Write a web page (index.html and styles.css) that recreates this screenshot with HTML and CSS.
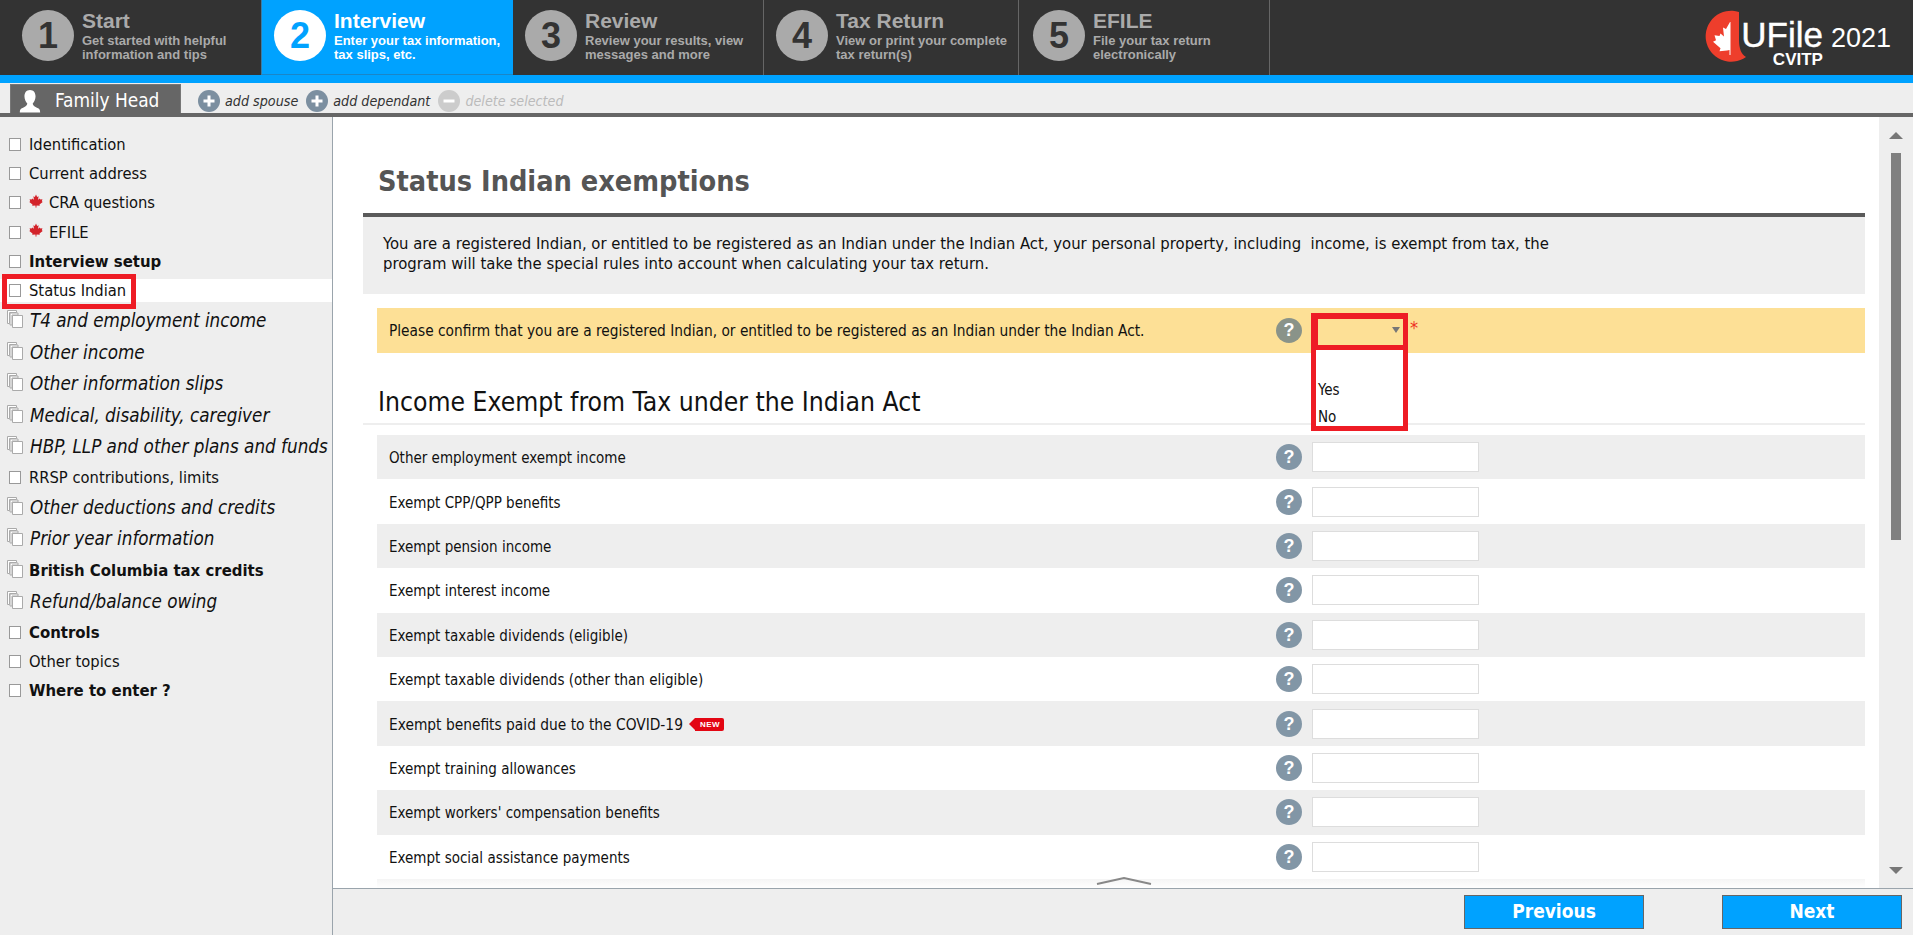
FILE: index.html
```html
<!DOCTYPE html>
<html lang="en">
<head>
<meta charset="utf-8">
<title>UFile CVITP 2021</title>
<link rel="stylesheet" href="styles.css">
</head>
<body>
<svg class="defs" width="0" height="0" aria-hidden="true">
  <symbol id="leaf" viewBox="0 0 24 24"><path d="M12 1 14 5l2.500-1-1 6 3-2.500 1 2 3.500-.5-1 3.500 1.500 1L18 18l.5 2-5.500-.5-.5 4h-1l-.5-4-5.500.5.5-2-5.500-4.500 1.500-1-1-3.500 3.500.5 1-2 3 2.500-1-6 2.500 1z"/></symbol>
  <symbol id="copies" viewBox="0 0 16 18"><path d="M.5.500h9v2h-7v11h-2zM3 3h8v2H5v10H3z" fill="#fff" stroke="#aaa"/><path d="M5.500 5.500h10v12h-10z" fill="#fff" stroke="#aaa"/></symbol>
  <symbol id="plus" viewBox="0 0 22 22"><circle cx="11" cy="11" r="11"/><path d="M5.500 11h11M11 5.500v11" stroke="#fff" stroke-width="3"/></symbol>
</svg>

<header class="topbar">
  <nav class="steps">
    <a class="step step-first"><span class="num">1</span><span class="step-text"><b>Start</b><small>Get started with helpful<br>information and tips</small></span></a>
    <a class="step step-active"><span class="num">2</span><span class="step-text"><b>Interview</b><small>Enter your tax information,<br>tax slips, etc.</small></span></a>
    <a class="step step-3"><span class="num">3</span><span class="step-text"><b>Review</b><small>Review your results, view<br>messages and more</small></span></a>
    <a class="step step-4"><span class="num">4</span><span class="step-text"><b>Tax Return</b><small>View or print your complete<br>tax return(s)</small></span></a>
    <a class="step step-5"><span class="num">5</span><span class="step-text"><b>EFILE</b><small>File your tax return<br>electronically</small></span></a>
  </nav>
  <div class="logo">
    <svg class="logo-mark" viewBox="0 0 44 52" width="44" height="52"><path d="M34 2A25.500 25.500 0 1 0 41 47C36 44 34 38 34 30z" fill="#ee3e2c"/><path d="M25 12l-4 7-3-1.500 1 9-3.500-3-1 2.500-5-.8 1.500 5-3 1.500 7.500 6.500-1 3 7.500-.8 2.500-.4v5h1V12z" fill="#fff"/></svg>
    <div class="logo-text"><span class="logo-ufile">UFile</span><span class="logo-cvitp">CVITP</span></div>
    <span class="logo-year">2021</span>
  </div>
</header>
<div class="bluebar"></div>

<div class="toolbar">
  <div class="person-tab">
    <svg class="person" viewBox="0 0 26 26" width="24" height="24"><path d="M13 1c4 0 6 3 6 7 0 3-1.500 6-3 7.500 0 2 1 3 4 4.500 3 1.200 4 2 4 5.500H2c0-3.500 1-4.300 4-5.500 3-1.500 4-2.500 4-4.500C8.500 14 7 11 7 8c0-4 2-7 6-7z" fill="#fff"/></svg>
    <span>Family Head</span>
  </div>
  <a class="tool"><svg class="tool-icon"><use href="#plus"/></svg>add spouse</a>
  <a class="tool"><svg class="tool-icon"><use href="#plus"/></svg>add dependant</a>
  <a class="tool tool-off"><svg class="tool-icon" viewBox="0 0 22 22"><circle cx="11" cy="11" r="11"/><path d="M5.500 11h11" stroke="#fff" stroke-width="3"/></svg>delete selected</a>
</div>

<div class="workspace">
  <aside class="sidebar">
    <ul class="nav">
      <li class="nav-item"><i class="box"></i>Identification</li>
      <li class="nav-item"><i class="box"></i>Current address</li>
      <li class="nav-item"><i class="box"></i><svg class="mini-leaf"><use href="#leaf"/></svg>CRA questions</li>
      <li class="nav-item"><i class="box"></i><svg class="mini-leaf"><use href="#leaf"/></svg>EFILE</li>
      <li class="nav-item nav-bold"><i class="box"></i>Interview setup</li>
      <li class="nav-item nav-current"><i class="box"></i>Status Indian</li>
      <li class="nav-item nav-group"><svg class="copies"><use href="#copies"/></svg>T4 and employment income</li>
      <li class="nav-item nav-group"><svg class="copies"><use href="#copies"/></svg>Other income</li>
      <li class="nav-item nav-group"><svg class="copies"><use href="#copies"/></svg>Other information slips</li>
      <li class="nav-item nav-group"><svg class="copies"><use href="#copies"/></svg>Medical, disability, caregiver</li>
      <li class="nav-item nav-group"><svg class="copies"><use href="#copies"/></svg>HBP, LLP and other plans and funds</li>
      <li class="nav-item"><i class="box"></i>RRSP contributions, limits</li>
      <li class="nav-item nav-group"><svg class="copies"><use href="#copies"/></svg>Other deductions and credits</li>
      <li class="nav-item nav-group"><svg class="copies"><use href="#copies"/></svg>Prior year information</li>
      <li class="nav-item nav-group nav-group-bold"><svg class="copies"><use href="#copies"/></svg>British Columbia tax credits</li>
      <li class="nav-item nav-group"><svg class="copies"><use href="#copies"/></svg>Refund/balance owing</li>
      <li class="nav-item nav-bold"><i class="box"></i>Controls</li>
      <li class="nav-item"><i class="box"></i>Other topics</li>
      <li class="nav-item nav-bold"><i class="box"></i>Where to enter ?</li>
    </ul>
    <span class="annot annot-nav"></span>
  </aside>

  <div class="main">
    <div class="center">
      <svg class="side-chevron" viewBox="0 0 9 56" width="9" height="56"><path d="M1 1l7 27-7 27" fill="none" stroke="#999" stroke-width="1.500"/></svg>
      <div class="scroller">
        <div class="content">
          <h1 class="page-title">Status Indian exemptions</h1>
          <p class="intro">You are a registered Indian, or entitled to be registered as an Indian under the Indian Act, your personal property, including&nbsp; income, is exempt from tax, the program will take the special rules into account when calculating your tax return.</p>
          <div class="confirm">
            <span class="row-label">Please confirm that you are a registered Indian, or entitled to be registered as an Indian under the Indian Act.</span>
            <span class="help help-warm">?</span>
            <span class="select"><i class="caret"></i></span>
            <span class="req">*</span>
          </div>
          <h2 class="section">Income Exempt from Tax under the Indian Act</h2>
          <div class="rows">
            <div class="row"><span class="row-label">Other employment exempt income</span><span class="help">?</span><span class="field"></span></div>
            <div class="row"><span class="row-label">Exempt CPP/QPP benefits</span><span class="help">?</span><span class="field"></span></div>
            <div class="row"><span class="row-label">Exempt pension income</span><span class="help">?</span><span class="field"></span></div>
            <div class="row"><span class="row-label">Exempt interest income</span><span class="help">?</span><span class="field"></span></div>
            <div class="row"><span class="row-label">Exempt taxable dividends (eligible)</span><span class="help">?</span><span class="field"></span></div>
            <div class="row"><span class="row-label">Exempt taxable dividends (other than eligible)</span><span class="help">?</span><span class="field"></span></div>
            <div class="row"><span class="row-label row-label-wide">Exempt benefits paid due to the COVID-19<span class="new">NEW</span></span><span class="help">?</span><span class="field"></span></div>
            <div class="row"><span class="row-label">Exempt training allowances</span><span class="help">?</span><span class="field"></span></div>
            <div class="row"><span class="row-label">Exempt workers' compensation benefits</span><span class="help">?</span><span class="field"></span></div>
            <div class="row"><span class="row-label">Exempt social assistance payments</span><span class="help">?</span><span class="field"></span></div>
            <div class="row"></div>
          </div>
        </div>
        <div class="fade"></div>
        <svg class="bottom-chevron" viewBox="0 0 56 8" width="56" height="8"><path d="M1 7l27-6 27 6" fill="none" stroke="#888" stroke-width="2"/></svg>
        <div class="dropdown-annot">
          <div class="dropdown-top"></div>
          <div class="dropdown-list"><span>Yes</span><span>No</span></div>
        </div>
      </div>
      <div class="scrollbar">
        <i class="sb-up"></i>
        <div class="sb-track"><div class="sb-thumb"></div></div>
        <i class="sb-down"></i>
      </div>
    </div>
    <footer class="footer">
      <a class="btn">Previous</a>
      <a class="btn">Next</a>
    </footer>
  </div>
</div>
</body>
</html>
```
FILE: styles.css
```css
* { box-sizing: border-box; }
html, body { margin: 0; height: 100%; overflow: hidden; }
body {
  width: 1913px; height: 935px;
  display: flex; flex-direction: column;
  font-family: "DejaVu Sans", sans-serif;
  font-stretch: condensed;
  color: #111;
  background: #fff;
}
.defs { position: absolute; }

/* top bar */
.topbar { height: 75px; background: #333; display: flex; justify-content: space-between; font-family: "Liberation Sans", sans-serif; font-stretch: normal; }
.steps { display: flex; }
.step { display: flex; gap: 8px; padding: 10px 0 0 12px; border-right: 1px solid #666; color: #aaa; }
.step-first { width: 261px; padding-left: 22px; border-right: 0; }
.step-active { width: 252px; background: #00a2ff; color: #fff; border-right: 0; border-left: 1px solid #3a7ca5; box-shadow: inset 0 -1px 0 #1a86c8; }
.step-3 { width: 251px; }
.step-4 { width: 255px; }
.step-5 { width: 251px; padding-left: 14px; }
.num { width: 52px; height: 51px; border-radius: 50%; background: #aaa; color: #333; font: bold 36px/51px "Liberation Sans", sans-serif; text-align: center; flex: none; }
.step-active .num { background: #fff; color: #00a2ff; }
.step-text { display: flex; flex-direction: column; }
.step-text b { font-size: 21px; line-height: 21px; margin-bottom: 3px; }
.step-text small { font-size: 13px; font-weight: bold; line-height: 14px; white-space: nowrap; }

.logo { display: flex; align-items: flex-start; padding: 10px 22px 0 0; color: #fff; }
.logo-mark { margin-right: -9px; flex: none; }
.logo-text { display: flex; flex-direction: column; align-items: flex-end; width: 83px; margin-top: 7.400px; }
.logo-ufile { font-size: 35px; line-height: 35px; -webkit-text-stroke: .4px #fff; }
.logo-cvitp { font-size: 17px; font-weight: bold; line-height: 14px; margin-top: .5px; }
.logo-year { font-size: 27px; line-height: 27px; margin: 15.400px 0 0 8px; }

.bluebar { height: 8px; background: #00a2ff; }

/* toolbar */
.toolbar { height: 34px; background: #eee; border-bottom: 4px solid #666; display: flex; align-items: flex-end; padding-left: 10px; }
.person-tab { width: 171px; height: 29px; background: #666; border: 1px solid #777; border-bottom: 0; color: #fff; font-size: 18.900px; display: flex; align-items: center; gap: 13px; padding-left: 7px; }
.person-tab span { margin-top: 2px; }
.person { flex: none; margin-top: 4px; }
.tool { display: flex; align-items: center; gap: 5px; height: 30px; font-size: 14.200px; font-style: italic; color: #333; margin-left: 8px; padding-top: 6px; }
.person-tab + .tool { margin-left: 17px; }
.tool-icon { width: 22px; height: 22px; fill: #7c8fa0; flex: none; }
.tool-off { color: #bbb; }
.tool-off .tool-icon { fill: #ccc; }

/* workspace */
.workspace { flex: 1; display: flex; min-height: 0; }
.sidebar { width: 333px; flex: none; background: #eee; border-right: 1px solid #9aa4ac; position: relative; overflow: hidden; }
.nav { list-style: none; margin: 0; padding: 16px 0 0; }
.nav-item { height: 23px; margin-bottom: 6.200px; display: flex; align-items: center; font-size: 16.400px; white-space: nowrap; padding-left: 9px; }
.nav-bold { font-weight: bold; font-size: 16.600px; }
.nav-current { background: #fff; }
.nav-group { height: 25.300px; font-size: 18.700px; font-style: italic; padding-left: 7px; }
.nav-group-bold { font-size: 16.600px; font-weight: bold; font-style: normal; }
.box { width: 12px; height: 13px; background: #fff; border: 1px solid #999; flex: none; margin-right: 8px; }
.copies { width: 16px; height: 18px; flex: none; margin: -3px 7px 0 0; }
.nav-group-bold .copies { margin-right: 6px; }
.mini-leaf { width: 14px; height: 14px; fill: #d3232a; flex: none; margin: -4px 6px 0 0; }
.annot { position: absolute; border: 5px solid #ee1c25; pointer-events: none; }
.annot-nav { left: 2px; top: 157px; width: 134px; height: 35px; }

/* main */
.main { flex: 1; display: flex; flex-direction: column; min-width: 0; }
.center { flex: 1; display: flex; position: relative; min-height: 0; }
.side-chevron { position: absolute; left: 5px; top: 403px; }
.scroller { flex: 1; position: relative; overflow: hidden; background: #fff; }
.content { padding: 44px 14px 0 30px; }
.page-title { margin: 0 0 0 15px; height: 52px; font-size: 28.600px; line-height: 40px; font-weight: bold; color: #555; white-space: nowrap; }
.intro { margin: 0; height: 81px; background: #eee; border-top: 4px solid #5a5a5a; padding: 17px 270px 0 20px; font-size: 16.550px; line-height: 20px; }
.confirm { margin: 14px 0 0 14px; height: 45px; background: #fde096; display: flex; align-items: center; position: relative; }
.confirm .row-label { font-size: 15.300px; }
.row-label { width: 899px; padding-left: 12px; font-size: 15px; white-space: nowrap; flex: none; display: flex; align-items: center; }
.row .row-label { padding-top: 2px; }
.row .row-label-wide { font-size: 15.350px; }
.help { width: 26px; height: 26px; flex: none; border-radius: 50%; background: #8296a6; color: #fff; font: bold 18px/26px "Liberation Sans", sans-serif; text-align: center; }
.help-warm { background: #8a9389; height: 25px; line-height: 25px; }
.select { width: 85px; height: 26px; margin: 0 0 0 16px; position: relative; }
.caret { position: absolute; right: 3px; top: 9px; border: 4px solid transparent; border-top: 6px solid #777; border-bottom: 0; }
.req { color: #ee3124; font-size: 18px; margin: -6px 0 0 7px; }
.section { margin: 32px 0 0 15px; height: 38px; font-size: 26.300px; line-height: 34px; font-weight: normal; color: #111; white-space: nowrap; }
.rows { border-top: 2px solid #eee; padding-top: 10px; }
.row { height: 44.400px; margin-left: 14px; display: flex; align-items: center; }
.row:nth-child(odd) { background: #eee; }
.field { width: 167px; height: 30px; margin-left: 10px; background: #fff; border: 1.500px solid #ddd; flex: none; }
.new { position: relative; margin-left: 12px; height: 13px; padding: 0 4px 0 5px; background: #e30613; color: #fff; font: bold 8px/13px "Liberation Sans", sans-serif; letter-spacing: .5px; border-radius: 0 2px 2px 0; }
.new::before { content: ""; position: absolute; left: -6px; top: 0; border: 6.500px solid transparent; border-left: 0; border-right: 6px solid #e30613; }
.fade { position: absolute; left: 0; right: 0; bottom: 0; height: 9px; background: linear-gradient(rgba(255,255,255,.4), #fff); }
.bottom-chevron { position: absolute; left: 763px; bottom: 3px; }
.dropdown-annot { position: absolute; left: 978px; top: 196px; width: 97px; }
.dropdown-top { height: 37px; border: solid #ee1c25; border-width: 6px 5px 5px 7px; }
.dropdown-list { height: 81px; background: #fff; border: 5px solid #ee1c25; border-top: 0; display: flex; flex-direction: column; font-size: 15px; padding: 27px 0 0 2px; }
.dropdown-list span { height: 27px; line-height: 27px; }

.scrollbar { width: 34px; flex: none; background: #eee; display: flex; flex-direction: column; align-items: center; padding: 15px 0 14px; }
.sb-up, .sb-down { flex: none; border: 7px solid transparent; width: 0; height: 0; }
.sb-up { border-top: 0; border-bottom: 7px solid #777; }
.sb-down { border-bottom: 0; border-top: 7px solid #777; }
.sb-track { flex: 1; width: 10px; padding-top: 14px; }
.sb-thumb { height: 387px; background: #808080; }

.footer { height: 47px; flex: none; background: #eee; border-top: 1px solid #9aa4ac; display: flex; justify-content: flex-end; gap: 78px; padding: 6px 11px 0 0; }
.btn { width: 180px; height: 34px; background: #00a2ff; border: 1px solid #666; color: #fff; font-size: 19px; font-weight: bold; line-height: 31px; text-align: center; }
```
